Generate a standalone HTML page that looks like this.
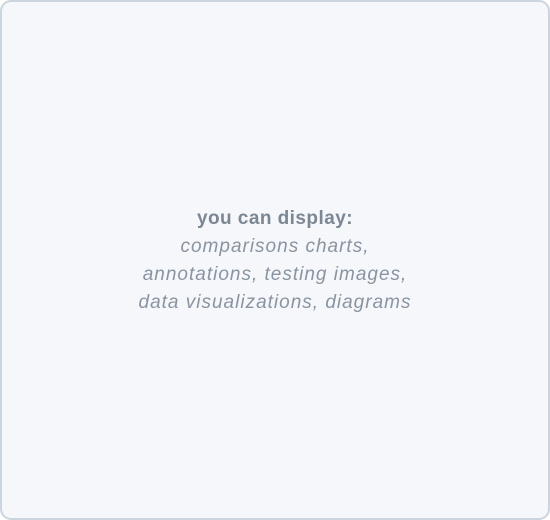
<!DOCTYPE html>
<html><head><style>
html,body{margin:0;padding:0;width:550px;height:520px;background:#fff;}
.box{position:absolute;left:0;top:0;width:546px;height:516px;border:2px solid #ccd5de;border-radius:11px;background:#f5f7fb;}
.t{position:absolute;left:0;right:0;top:205px;text-align:center;font-family:"Liberation Sans",sans-serif;font-size:19px;line-height:28px;color:#8a94a1;letter-spacing:1px;}
.b{font-weight:bold;color:#7c8794;letter-spacing:0.45px;}
.i{font-style:italic;}
</style></head><body>
<div class="box"></div>
<div class="t"><div class="b">you can display:</div>
<div class="i">comparisons charts,<br>annotations, testing images,<br>data visualizations, diagrams</div></div>
</body></html>
